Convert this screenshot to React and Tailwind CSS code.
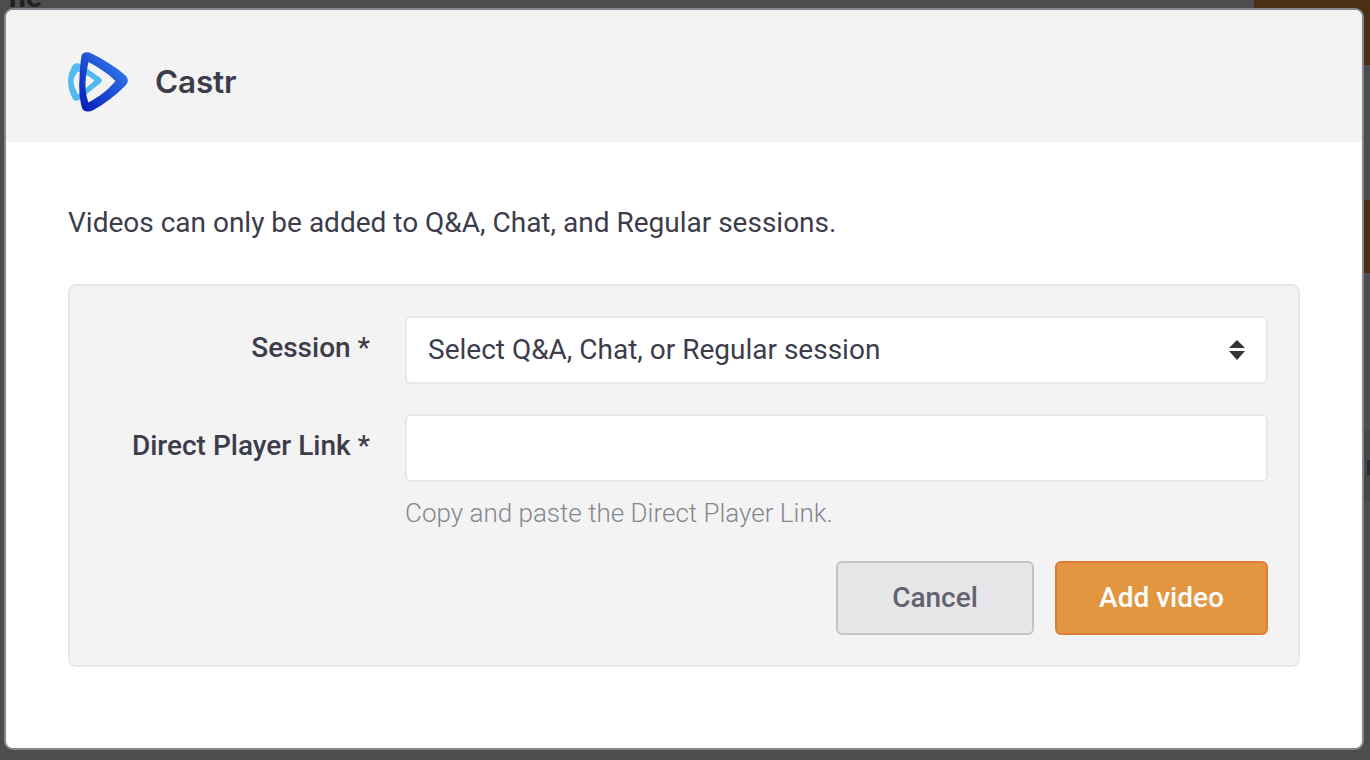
const sans = "font-['Roboto','Liberation_Sans',sans-serif]";

function Logo() {
  return (
    <svg width="60" height="60" viewBox="0 0 60 60" className="shrink-0">
      <defs>
        <linearGradient id="big" x1="12" y1="56" x2="58" y2="16" gradientUnits="userSpaceOnUse">
          <stop offset="0" stopColor="#0a1db8" />
          <stop offset="0.5" stopColor="#1a49d2" />
          <stop offset="1" stopColor="#3378e8" />
        </linearGradient>
      </defs>
      <path
        fillRule="evenodd"
        fill="#52b9f1"
        d="M5 13 C7.5 10.5 10.5 10.8 13 12.5 C20 17 27 22 32 25.5 C34.5 27.5 34.5 29.5 32 31.5 C26 36 20 41 13 46.5 C10 49 7 50 5 47 C1.5 41 0 35 0 29 C0 23 2 18 5 13 Z M10 19.5 C7.5 22.5 5.5 26 5.5 29.5 C5.5 33 7.5 38 10 42.5 C15 38.5 21 33.5 26.5 28.5 C21.5 24.5 15.5 21 10 19.5 Z"
      />
      <path
        fillRule="evenodd"
        fill="url(#big)"
        d="M13.5 3.5 C15.5 0 19 -0.5 23.5 1.5 C35 7 47 14.5 57 23 C60.8 26.5 60.8 30.5 57 34 C47 44 36 52 25.5 58 C20 60.5 15.5 60 14 56 C12 49 11 40 11.3 31 C11.6 21 12.3 11 13.5 3.5 Z M20.5 10 C19 17 17.8 24 17.5 31 C17.3 38 18.3 45 20.5 50.5 C30 45.5 39.5 38.5 47.5 29 C39.5 21 30 15 20.5 10 Z"
      />
    </svg>
  );
}

function Backdrop() {
  return (
    <div aria-hidden="true" className="absolute inset-0">
      <div className="absolute left-[1254px] top-0 w-[116px] h-[65px] bg-[#4a2f14]" />
      <div className="absolute left-[1364px] top-[200px] w-[6px] h-[73px] bg-[#4a2f14]" />
      <div className="absolute left-[1364px] top-[430px] w-[6px] h-[72px] bg-[#474747]" />
      <div className="absolute left-[1367px] top-[460px] w-[3px] h-[15px] bg-[#2a2a30]" />
      <div className="absolute left-[9px] top-[-23px] text-[30px] leading-[40px] font-bold text-[#1f1f24]">ne</div>
    </div>
  );
}

export default function App() {
  return (
    <div className={`relative w-[1370px] h-[760px] overflow-hidden bg-[#4d4d4d] pt-2 pl-1 ${sans}`}>
      <Backdrop />
      <div className="relative w-[1360px] h-[742px] rounded-[9px] border-2 border-[#85868f] bg-white overflow-hidden">
        <header className="h-[132px] bg-[#f3f3f3] pl-[62px] flex items-center gap-[27px] pt-[11px]">
          <Logo />
          <div className="text-[31.5px] leading-[60px] font-semibold text-[#3c3c4b] font-['Inter',sans-serif] -tracking-[0.2px]">Castr</div>
        </header>
        <div className="px-[62px] pt-[63px]">
          <p className="text-[28px] leading-[36px] text-[#3c3c4b]">
            Videos can only be added to Q&amp;A, Chat, and Regular sessions.
          </p>
          <form className="mt-[43px] h-[383px] rounded-[8px] border-2 border-[#e8e8e8] bg-[#f3f3f3] pt-[30px] pr-[30px] grid grid-cols-[300px_863px] gap-x-[35px] content-start">
            <label className="text-right text-[28px] leading-[64px] font-medium text-[#3c3c4b]">Session *</label>
            <div className="relative">
              <select className="w-full h-[68px] appearance-none rounded-[6px] border-2 border-[#e8e8e8] bg-white pl-[21px] text-[28px] text-[#3c3c4b] outline-none">
                <option>Select Q&amp;A, Chat, or Regular session</option>
              </select>
              <svg width="16" height="20" viewBox="0 0 16 20" className="absolute right-[23px] top-[24px] pointer-events-none">
                <path d="M8 0 L16 8 H0 Z M0 11 H16 L8 20 Z" fill="#333338" />
              </svg>
            </div>
            <label className="mt-[30px] text-right text-[28px] leading-[64px] font-medium text-[#3c3c4b]">Direct Player Link *</label>
            <div className="mt-[30px]">
              <input className="block w-full h-[68px] rounded-[6px] border-2 border-[#e8e8e8] bg-white outline-none" />
              <p className="mt-[13px] text-[26px] leading-[36px] font-light text-[#85868f]">Copy and paste the Direct Player Link.</p>
              <div className="mt-[30px] flex justify-end gap-[21px]">
                <button type="button" className="w-[198px] h-[74px] rounded-[6px] border-2 border-[#c3c4c8] bg-[#e7e7ea] text-[28px] font-medium text-[#62636f]">Cancel</button>
                <button type="button" className="w-[213px] h-[74px] rounded-[6px] border-2 border-[#e07b3a] bg-[#e39640] text-[28px] font-medium text-white">Add video</button>
              </div>
            </div>
          </form>
        </div>
      </div>
    </div>
  );
}
